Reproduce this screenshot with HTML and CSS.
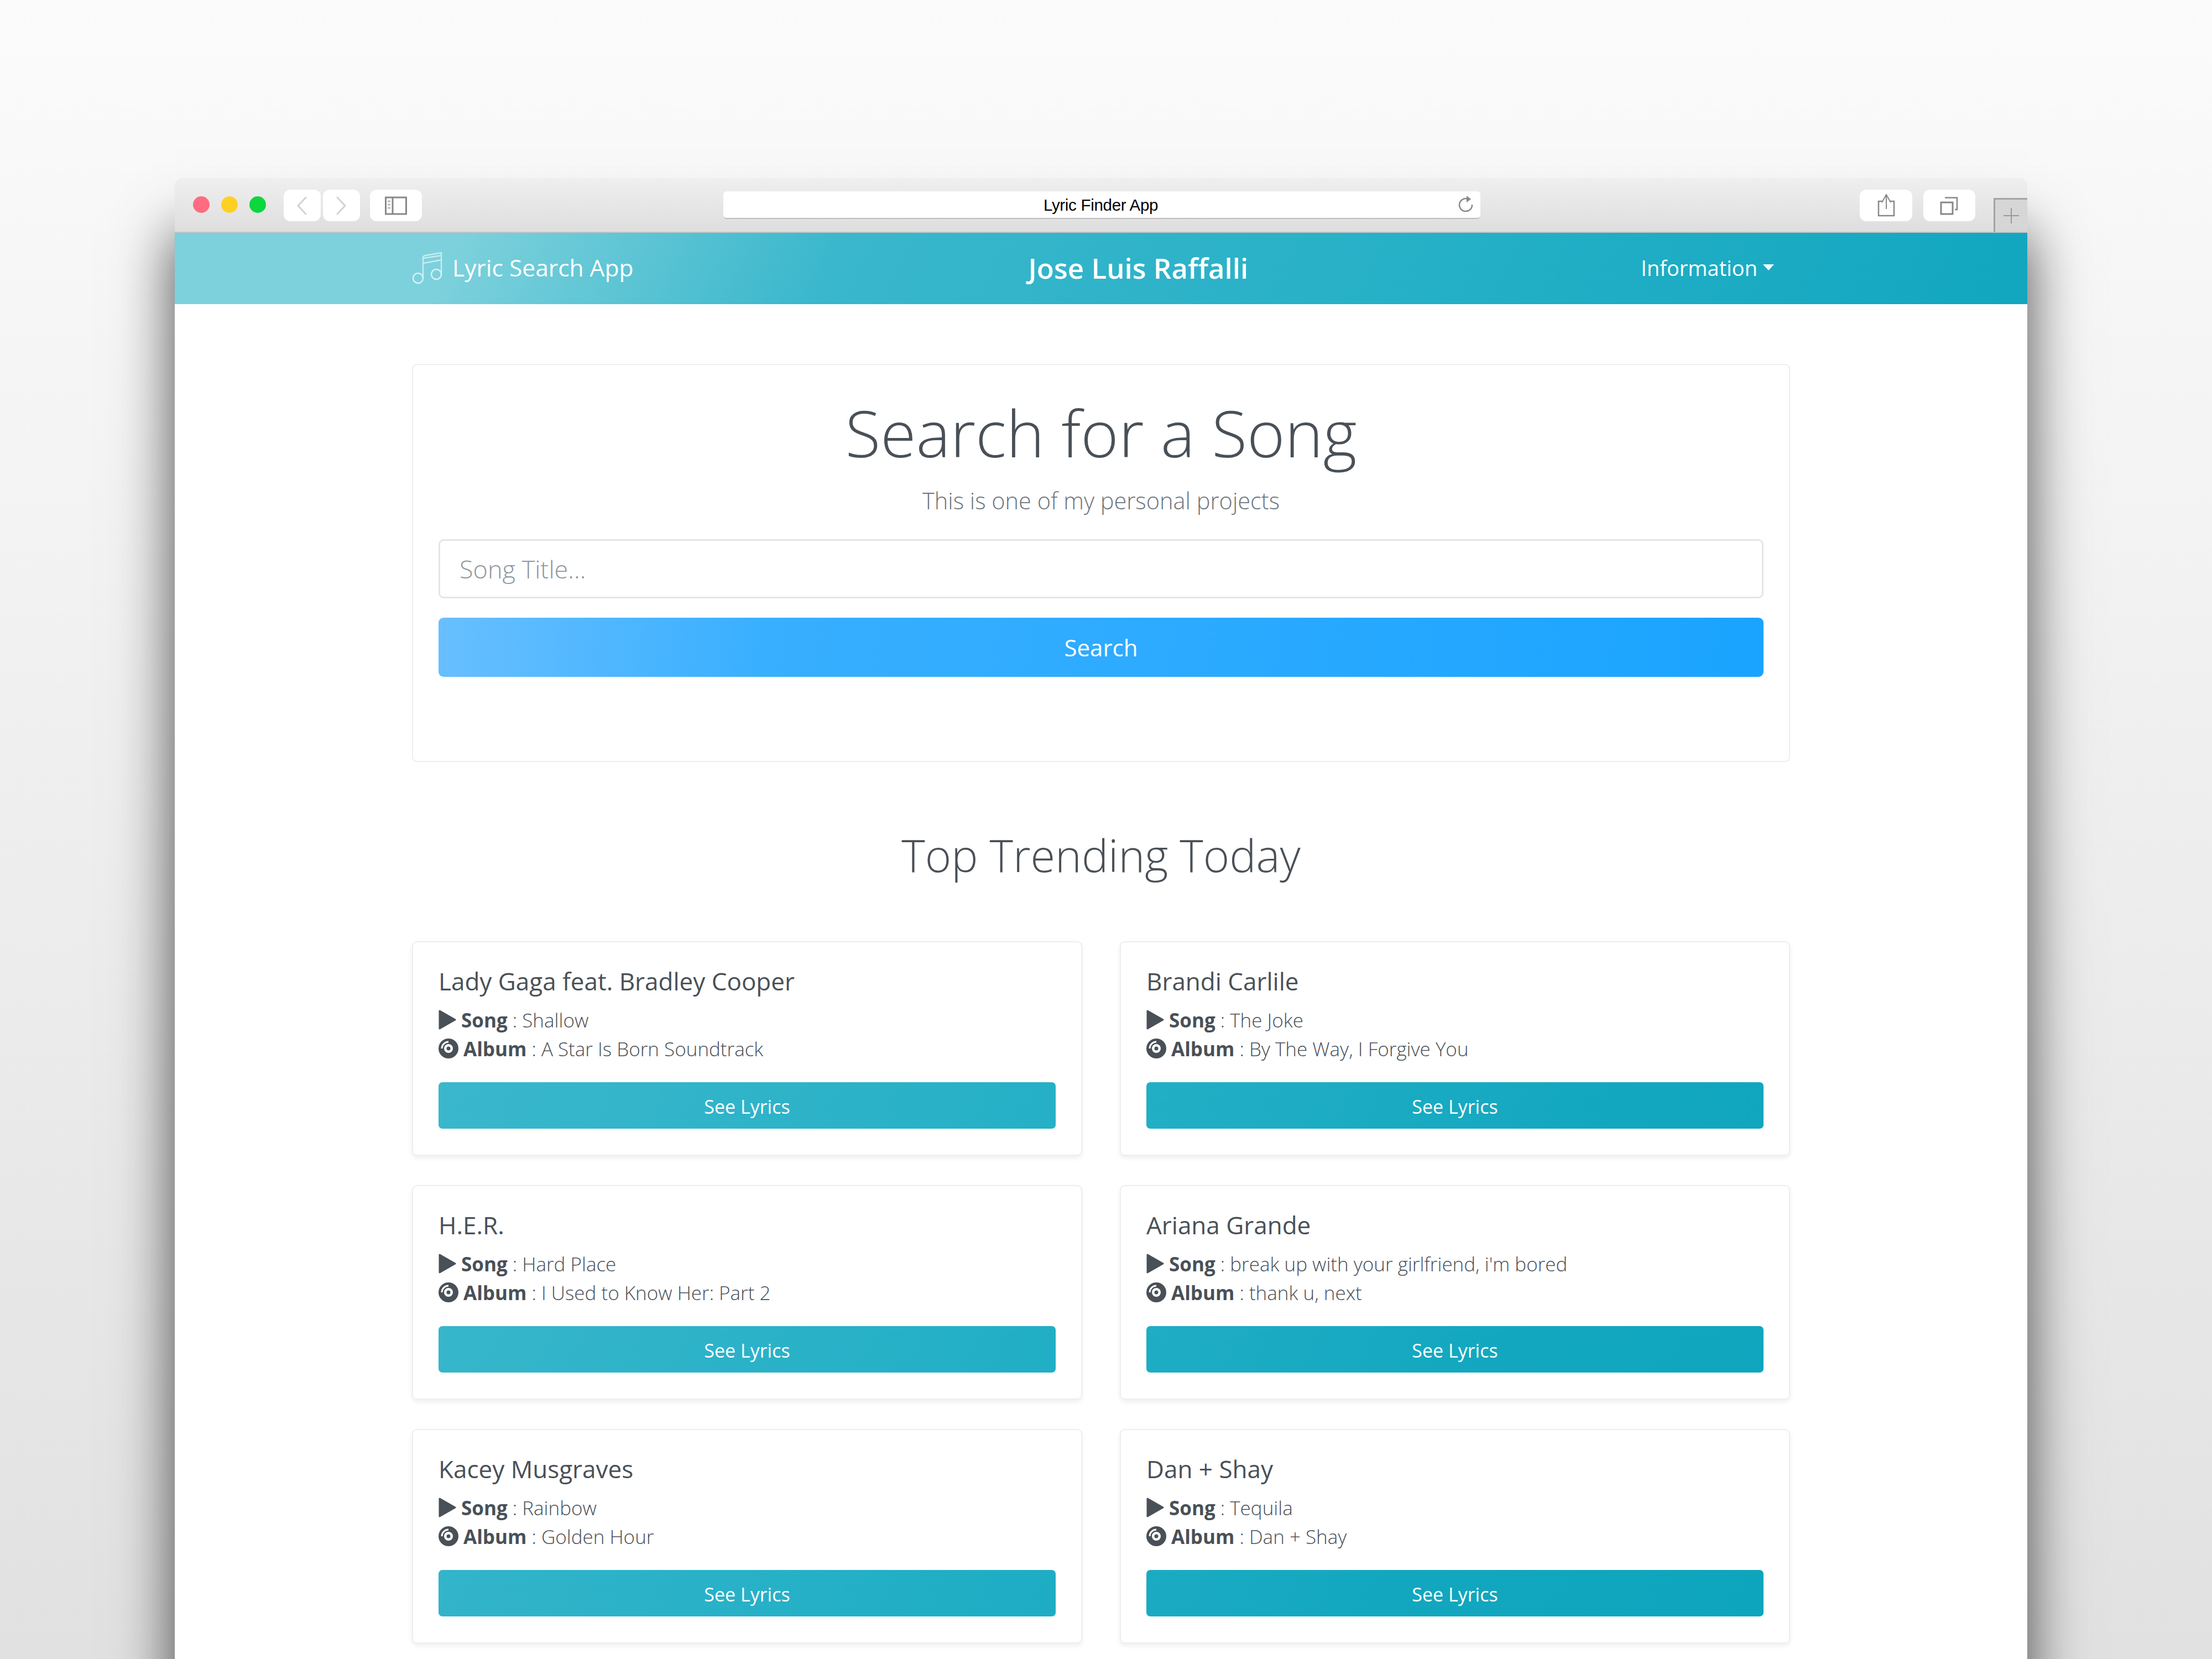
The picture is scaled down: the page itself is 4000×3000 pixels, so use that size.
FILE: index.html
```html
<!DOCTYPE html>
<html lang="en">
<head>
    <meta charset="UTF-8">
    <title>Lyric Finder App</title>
    <link rel="stylesheet" href="styles.css">
</head>
<body>
    <div class="window">
        <div class="toolbar">
            <div class="lights">
                <span class="light light-red"></span>
                <span class="light light-yellow"></span>
                <span class="light light-green"></span>
            </div>
            <div class="tool tool-back">
                <svg width="20" height="34" viewBox="0 0 20 34"><path d="M17 2 L3 17 L17 32" fill="none" stroke="#d2d2d2" stroke-width="3" stroke-linecap="round"/></svg>
            </div>
            <div class="tool tool-next">
                <svg width="20" height="34" viewBox="0 0 20 34"><path d="M3 2 L17 17 L3 32" fill="none" stroke="#d2d2d2" stroke-width="3" stroke-linecap="round"/></svg>
            </div>
            <div class="tool tool-side">
                <svg width="40" height="34" viewBox="0 0 40 34"><rect x="1.500" y="2" width="37" height="30" fill="none" stroke="#888" stroke-width="3"/><path d="M14 2 V32" stroke="#888" stroke-width="3"/><path d="M5 9 H10 M5 15 H10 M5 21 H10" stroke="#bbb" stroke-width="3"/></svg>
            </div>
            <div class="url">
                <span class="url-text">Lyric Finder App</span>
                <svg class="reload" width="28" height="32" viewBox="0 0 28 32"><path d="M18 7 A11.500 11.500 0 1 0 25 17" fill="none" stroke="#888" stroke-width="2.500"/><path d="M15 1 L23 7 L15 13 Z" fill="#888"/></svg>
            </div>
            <div class="tool tool-share">
                <svg width="32" height="44" viewBox="0 0 32 44"><path d="M10 14 H2 V40 H30 V14 H22" fill="none" stroke="#888" stroke-width="2.500"/><path d="M16 2 V28 M8 16 L16 2 L24 16" fill="none" stroke="#888" stroke-width="2"/></svg>
            </div>
            <div class="tool tool-tabs">
                <svg width="34" height="34" viewBox="0 0 34 34"><rect x="2" y="11" width="21" height="21" fill="none" stroke="#888" stroke-width="3"/><path d="M9 2.500 H31 V24 H27" fill="none" stroke="#888" stroke-width="2.500"/></svg>
            </div>
            <div class="new-tab">
                <svg width="30" height="30" viewBox="0 0 30 30"><path d="M15 1 V29 M1 15 H29" stroke="#999" stroke-width="2"/></svg>
            </div>
        </div>

        <div class="page">
            <nav class="navbar">
                <a class="brand">
                    <svg class="note" width="58" height="60" viewBox="0 0 58 60"><path d="M19 50 V12 Q19 9 23 8 L52 3 V42 M19 22 L52 16 M19 13 L52 8" fill="none" stroke="#c5ecef" stroke-width="2.500"/><circle cx="10" cy="49" r="9" fill="none" stroke="#d5f2f4" stroke-width="2.500"/><circle cx="43" cy="42" r="9" fill="none" stroke="#d5f2f4" stroke-width="2.500"/></svg>
                    Lyric Search App
                </a>
                <span class="owner">Jose Luis Raffalli</span>
                <a class="info">Information<span class="caret"></span></a>
            </nav>

            <div class="container">
                <section class="search-card">
                    <h1 class="search-title">Search for a Song</h1>
                    <p class="search-sub">This is one of my personal projects</p>
                    <input class="search-input" type="text" placeholder="Song Title...">
                    <button class="search-btn">Search</button>
                </section>

                <h2 class="trending">Top Trending Today</h2>

                <div class="track-grid">
                    <div class="track">
                        <h5 class="artist">Lady Gaga feat. Bradley Cooper</h5>
                        <p class="line"><svg class="icon-play" viewBox="0 0 32 36"><path d="M2 2 L30 18 L2 34 Z" fill="#495057" stroke="#495057" stroke-width="3" stroke-linejoin="round"/></svg><strong>Song</strong> : Shallow</p>
                        <p class="line"><svg class="icon-disc" viewBox="0 0 36 36"><circle cx="18" cy="18" r="18" fill="#495057"/><path d="M6 18 A12 12 0 0 1 18 6" fill="none" stroke="#fff" stroke-width="3"/><circle cx="18" cy="18" r="8" fill="#fff"/><circle cx="18" cy="18" r="3.500" fill="#495057"/></svg><strong>Album</strong> : A Star Is Born Soundtrack</p>
                        <a class="lyrics-btn">See Lyrics</a>
                    </div>
                    <div class="track">
                        <h5 class="artist">Brandi Carlile</h5>
                        <p class="line"><svg class="icon-play" viewBox="0 0 32 36"><path d="M2 2 L30 18 L2 34 Z" fill="#495057" stroke="#495057" stroke-width="3" stroke-linejoin="round"/></svg><strong>Song</strong> : The Joke</p>
                        <p class="line"><svg class="icon-disc" viewBox="0 0 36 36"><circle cx="18" cy="18" r="18" fill="#495057"/><path d="M6 18 A12 12 0 0 1 18 6" fill="none" stroke="#fff" stroke-width="3"/><circle cx="18" cy="18" r="8" fill="#fff"/><circle cx="18" cy="18" r="3.500" fill="#495057"/></svg><strong>Album</strong> : By The Way, I Forgive You</p>
                        <a class="lyrics-btn">See Lyrics</a>
                    </div>
                    <div class="track">
                        <h5 class="artist">H.E.R.</h5>
                        <p class="line"><svg class="icon-play" viewBox="0 0 32 36"><path d="M2 2 L30 18 L2 34 Z" fill="#495057" stroke="#495057" stroke-width="3" stroke-linejoin="round"/></svg><strong>Song</strong> : Hard Place</p>
                        <p class="line"><svg class="icon-disc" viewBox="0 0 36 36"><circle cx="18" cy="18" r="18" fill="#495057"/><path d="M6 18 A12 12 0 0 1 18 6" fill="none" stroke="#fff" stroke-width="3"/><circle cx="18" cy="18" r="8" fill="#fff"/><circle cx="18" cy="18" r="3.500" fill="#495057"/></svg><strong>Album</strong> : I Used to Know Her: Part 2</p>
                        <a class="lyrics-btn">See Lyrics</a>
                    </div>
                    <div class="track">
                        <h5 class="artist">Ariana Grande</h5>
                        <p class="line"><svg class="icon-play" viewBox="0 0 32 36"><path d="M2 2 L30 18 L2 34 Z" fill="#495057" stroke="#495057" stroke-width="3" stroke-linejoin="round"/></svg><strong>Song</strong> : break up with your girlfriend, i'm bored</p>
                        <p class="line"><svg class="icon-disc" viewBox="0 0 36 36"><circle cx="18" cy="18" r="18" fill="#495057"/><path d="M6 18 A12 12 0 0 1 18 6" fill="none" stroke="#fff" stroke-width="3"/><circle cx="18" cy="18" r="8" fill="#fff"/><circle cx="18" cy="18" r="3.500" fill="#495057"/></svg><strong>Album</strong> : thank u, next</p>
                        <a class="lyrics-btn">See Lyrics</a>
                    </div>
                    <div class="track">
                        <h5 class="artist">Kacey Musgraves</h5>
                        <p class="line"><svg class="icon-play" viewBox="0 0 32 36"><path d="M2 2 L30 18 L2 34 Z" fill="#495057" stroke="#495057" stroke-width="3" stroke-linejoin="round"/></svg><strong>Song</strong> : Rainbow</p>
                        <p class="line"><svg class="icon-disc" viewBox="0 0 36 36"><circle cx="18" cy="18" r="18" fill="#495057"/><path d="M6 18 A12 12 0 0 1 18 6" fill="none" stroke="#fff" stroke-width="3"/><circle cx="18" cy="18" r="8" fill="#fff"/><circle cx="18" cy="18" r="3.500" fill="#495057"/></svg><strong>Album</strong> : Golden Hour</p>
                        <a class="lyrics-btn">See Lyrics</a>
                    </div>
                    <div class="track">
                        <h5 class="artist">Dan + Shay</h5>
                        <p class="line"><svg class="icon-play" viewBox="0 0 32 36"><path d="M2 2 L30 18 L2 34 Z" fill="#495057" stroke="#495057" stroke-width="3" stroke-linejoin="round"/></svg><strong>Song</strong> : Tequila</p>
                        <p class="line"><svg class="icon-disc" viewBox="0 0 36 36"><circle cx="18" cy="18" r="18" fill="#495057"/><path d="M6 18 A12 12 0 0 1 18 6" fill="none" stroke="#fff" stroke-width="3"/><circle cx="18" cy="18" r="8" fill="#fff"/><circle cx="18" cy="18" r="3.500" fill="#495057"/></svg><strong>Album</strong> : Dan + Shay</p>
                        <a class="lyrics-btn">See Lyrics</a>
                    </div>
                </div>
            </div>
        </div>
    </div>
</body>
</html>
```

FILE: styles.css
```css
* {
    box-sizing: border-box;
}

html, body {
    margin: 0;
    height: 3000px;
    overflow: hidden;
}

body {
    font-family: "Open Sans", "Noto Sans", sans-serif;
    color: #495057;
    background: linear-gradient(#fbfbfb, #e1e1e1);
    padding: 322px 0 0 316px;
}

.window {
    width: 3350px;
}

/* browser chrome */
.toolbar {
    position: relative;
    z-index: 1;
    display: flex;
    align-items: flex-start;
    height: 99px;
    padding: 21px 0 0 33px;
    background: linear-gradient(#f0efef, #dfdede);
    border-bottom: 2px solid #c6c4c4;
    border-radius: 14px 14px 0 0;
}

.lights {
    display: flex;
    gap: 21px;
    margin-top: 12px;
}

.light {
    width: 30px;
    height: 30px;
    border-radius: 50%;
}

.light-red { background: #ff6b81; }
.light-yellow { background: #ffd024; }
.light-green { background: #0dd63e; }

.tool {
    display: flex;
    align-items: center;
    justify-content: center;
    height: 57px;
    background: #fff;
    border-radius: 12px;
}

.tool-back { width: 67px; margin-left: 32px; }
.tool-next { width: 67px; margin-left: 4px; }
.tool-side { width: 94px; margin-left: 18px; }
.tool-share { width: 95px; margin-left: 686px; }
.tool-tabs { width: 94px; margin-left: 20px; }

.url {
    position: relative;
    width: 1370px;
    height: 50px;
    margin: 3px 0 0 545px;
    text-align: center;
    background: #fff;
    border-bottom: 2px solid #bdbdbd;
    border-radius: 6px;
    font: 29.500px/49px "Liberation Sans", Arial, sans-serif;
    color: #000;
}

.url-text {
    margin-right: 4px;
    letter-spacing: -0.3px;
}

.reload {
    position: absolute;
    top: 7px;
    right: 12px;
}

.new-tab {
    display: flex;
    align-items: center;
    justify-content: center;
    align-self: flex-end;
    width: 61px;
    height: 61px;
    margin-left: 33px;
    background: #d6d6d6;
    border-top: 3px solid #a3a3a3;
    border-left: 3px solid #a3a3a3;
}

/* page */
.page {
    height: 2800px;
    background: #fff;
    box-shadow: 0 0 100px rgba(0, 0, 0, 0.7);
}

.navbar {
    display: flex;
    align-items: center;
    justify-content: space-between;
    height: 129px;
    padding: 0 429px 4px 430px;
    color: #fff;
    background: linear-gradient(115deg, #7dd1dc 19%, #3ab7cc 32%, #22afc6 55%, #12a7bf 72%, #06a2ba 100%) fixed;
}

.brand {
    display: flex;
    align-items: center;
    gap: 14px;
    font-size: 42.500px;
}

.owner {
    margin-left: 4px;
    font-size: 51px;
    font-weight: 600;
}

.info {
    display: flex;
    align-items: center;
    padding-right: 29px;
    font-size: 38px;
}

.caret {
    width: 0;
    height: 0;
    margin-left: 10px;
    border-top: 11px solid #fff;
    border-left: 10px solid transparent;
    border-right: 10px solid transparent;
}

.container {
    width: 2492px;
    margin-left: 429px;
    padding-top: 108px;
}

.search-card {
    height: 720px;
    padding: 42px 46px 0;
    text-align: center;
    border: 2px solid #eee;
    border-radius: 9px;
}

.search-title {
    margin: 0;
    font-size: 117px;
    line-height: 160px;
    font-weight: 300;
}

.search-sub {
    margin: 13px 0 0;
    font-size: 41.500px;
    line-height: 60px;
    font-weight: 300;
    color: #6c757d;
}

.search-input {
    display: block;
    width: 100%;
    height: 107px;
    margin-top: 40px;
    padding: 0 35px;
    font: 300 45px "Open Sans", sans-serif;
    border: 3px solid #e2e6ea;
    border-radius: 9px;
}

.search-input::placeholder {
    color: #8f979e;
    opacity: 1;
}

.search-btn {
    display: block;
    width: 100%;
    height: 107px;
    margin-top: 35px;
    padding-bottom: 2px;
    font: 400 42px "Open Sans", sans-serif;
    color: #fff;
    background: linear-gradient(95deg, #68bfff, #38afff 25%, #1aa4ff);
    border: none;
    border-radius: 9px;
}

.trending {
    margin: 106px 0 0;
    text-align: center;
    font-size: 81px;
    line-height: 124px;
    font-weight: 300;
}

.track-grid {
    display: grid;
    grid-template-columns: 1fr 1fr;
    column-gap: 68px;
    row-gap: 53px;
    margin-top: 94px;
}

.track {
    height: 388px;
    padding: 43px 46px 0;
    border: 2px solid #eee;
    border-radius: 9px;
    box-shadow: 0 4px 8px rgba(0, 0, 0, 0.07);
}

.artist {
    margin: 0 0 17px;
    font-size: 44px;
    line-height: 54px;
    font-weight: 500;
}

.line {
    display: flex;
    align-items: center;
    height: 52px;
    margin: 0;
    font-size: 35px;
    font-weight: 300;
    white-space: pre-wrap;
}

.line strong {
    font-weight: 700;
}

.icon-play {
    width: 32px;
    height: 36px;
    margin-right: 9px;
}

.icon-disc {
    width: 36px;
    height: 36px;
    margin-right: 9px;
}

.lyrics-btn {
    display: block;
    height: 84px;
    margin-top: 35px;
    text-align: center;
    font-size: 34px;
    line-height: 88px;
    color: #fff;
    background: linear-gradient(115deg, #7dd1dc 19%, #3ab7cc 32%, #22afc6 55%, #12a7bf 72%, #06a2ba 100%) fixed;
    border-radius: 7px;
}
```
